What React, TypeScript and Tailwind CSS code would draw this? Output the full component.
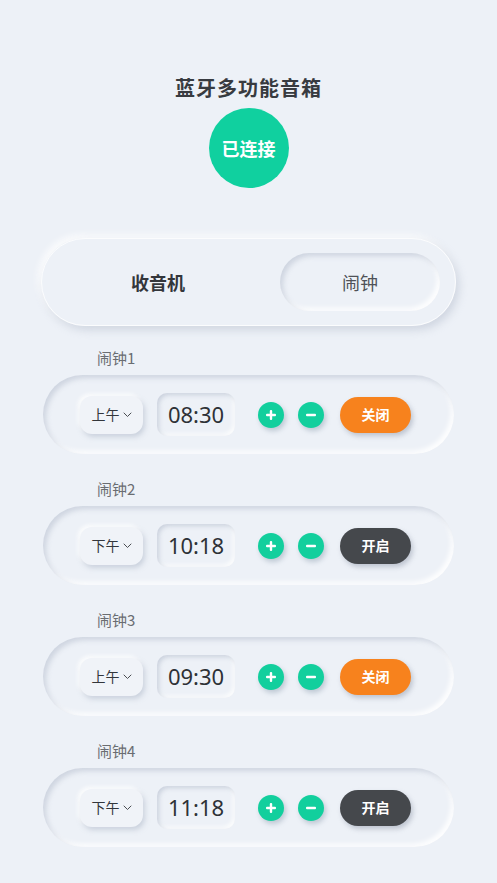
import React from "react";

const font = { fontFamily: '"Noto Sans CJK SC", "Noto Sans", sans-serif' };

type Alarm = { name: string; period: string; time: string; on: boolean };

const alarms: Alarm[] = [
  { name: "闹钟1", period: "上午", time: "08:30", on: false },
  { name: "闹钟2", period: "下午", time: "10:18", on: true },
  { name: "闹钟3", period: "上午", time: "09:30", on: false },
  { name: "闹钟4", period: "下午", time: "11:18", on: true },
];

function Chevron() {
  return (
    <svg width="9" height="6" viewBox="0 0 9 6" fill="none" className="ml-[3px] mt-[1px]">
      <path d="M1 1L4.5 4.5L8 1" stroke="#4a4d52" strokeWidth="1" strokeLinecap="round" strokeLinejoin="round" />
    </svg>
  );
}

function RoundBtn({ plus }: { plus: boolean }) {
  return (
    <div className="w-[26px] h-[26px] rounded-full bg-[#12cf9d] flex items-center justify-center shadow-[2px_3px_5px_rgba(120,140,160,0.4)]">
      <svg width="12" height="12" viewBox="0 0 12 12">
        <rect x="1" y="4.8" width="10" height="2.4" rx="1" fill="#fff" />
        {plus && <rect x="4.8" y="1" width="2.4" height="10" rx="1" fill="#fff" />}
      </svg>
    </div>
  );
}

function AlarmRow({ a }: { a: Alarm }) {
  return (
    <div className="flex flex-col">
      <div className="h-[20px] leading-[20px] pl-[97px] text-[15px] text-[#6a6d72]">{a.name}</div>
      <div className="mt-[7px] ml-[43px] w-[411px] h-[79px] rounded-full flex items-center pl-[37px] shadow-[inset_3px_3px_5px_rgba(170,180,198,0.45),inset_-3px_-3px_5px_rgba(255,255,255,0.95)]">
        <div className="w-[63px] h-[38px] rounded-[12px] bg-[#f0f3f8] flex items-center justify-center text-[14px] text-[#33363b] shadow-[2px_3px_5px_rgba(170,180,198,0.5),-2px_-2px_4px_rgba(255,255,255,0.95)]">
          <span>{a.period}</span>
          <Chevron />
        </div>
        <div className="ml-[14px] w-[78px] h-[43px] rounded-[10px] flex items-center justify-center text-[22px] text-[#2e3136] shadow-[inset_2px_2px_4px_rgba(170,180,198,0.5),inset_-2px_-2px_4px_rgba(255,255,255,0.95)]" style={{ fontFamily: '"Noto Sans", sans-serif' }}>
          {a.time}
        </div>
        <div className="ml-[23px]">
          <RoundBtn plus={true} />
        </div>
        <div className="ml-[14px]">
          <RoundBtn plus={false} />
        </div>
        <div
          className={
            "ml-[16px] w-[71px] h-[36px] rounded-full flex items-center justify-center text-[14px] font-bold text-white shadow-[2px_3px_5px_rgba(120,130,150,0.4)] " +
            (a.on ? "bg-[#45484c]" : "bg-[#f7821d]")
          }
        >
          {a.on ? "开启" : "关闭"}
        </div>
      </div>
    </div>
  );
}

export default function App() {
  return (
    <div className="min-h-screen w-full bg-[#edf1f7] pb-[30px]" style={font}>
      <div className="pt-[74px] h-[102px] text-center text-[20px] leading-[28px] font-bold text-[#383b40] tracking-[1px]">
        蓝牙多功能音箱
      </div>
      <div className="mt-[6px] flex justify-center">
        <div className="w-[80px] h-[80px] rounded-full bg-[#10d09f] flex items-center justify-center text-white text-[18px] font-bold">
          已连接
        </div>
      </div>
      <div className="mt-[50px] ml-[41px] w-[415px] h-[88px] rounded-full border border-white/80 flex items-center pr-[15px] shadow-[3px_4px_8px_rgba(170,180,198,0.45),-3px_-3px_7px_rgba(255,255,255,0.9)]">
        <div className="flex-1 text-center text-[18px] font-bold text-[#33363b] pr-[6px]">收音机</div>
        <div className="w-[160px] h-[58px] rounded-full flex items-center justify-center text-[18px] text-[#4f5257] shadow-[inset_3px_3px_5px_rgba(170,180,198,0.45),inset_-3px_-3px_5px_rgba(255,255,255,0.95)]">
          闹钟
        </div>
      </div>
      <div className="mt-[22px] flex flex-col gap-[25px]">
        {alarms.map((a) => (
          <AlarmRow key={a.name} a={a} />
        ))}
      </div>
    </div>
  );
}
